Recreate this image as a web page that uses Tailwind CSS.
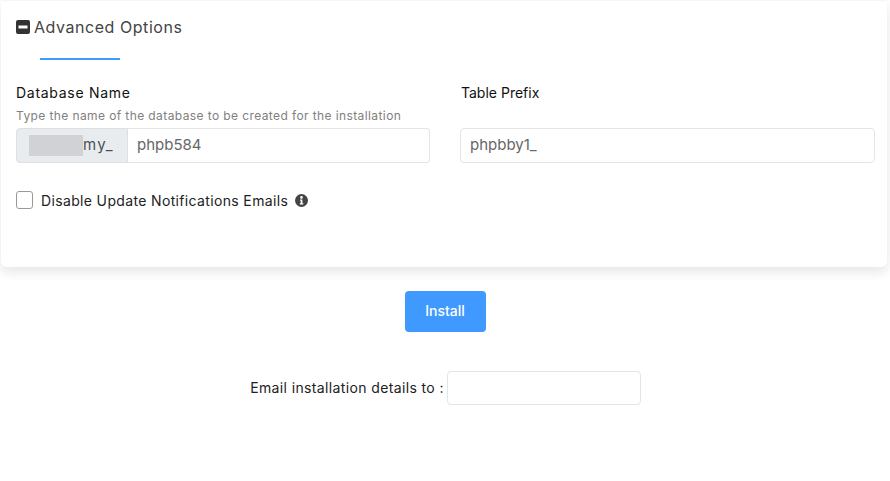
<!DOCTYPE html>
<html><head><meta charset="utf-8"><script src="https://cdn.jsdelivr.net/npm/@tailwindcss/browser@4"></script></head>
<body class="bg-white font-['Inter',sans-serif] text-[13px] text-[#111] overflow-hidden w-[890px] h-[481px]">
<div class="ml-px w-[886px] h-[267px] bg-white rounded-b-[6px] rounded-t-[3px] border-t border-[#f6f6f6] shadow-[0_5px_12px_rgba(0,0,0,0.10)] pl-[15px] pr-[12px]">
  <div class="flex items-center h-[18px] mt-[17px] gap-[4px]">
    <svg width="14" height="14" viewBox="0 0 14 14"><rect width="14" height="14" rx="2" fill="#333"/><rect x="2.5" y="5.5" width="9" height="3" fill="#fff"/></svg>
    <span class="text-[16px] leading-[18px] text-[#444] tracking-[0.55px]">Advanced Options</span>
  </div>
  <div class="ml-[24px] mt-[22px] w-[80px] h-[2px] bg-[#4099ff]"></div>
  <div class="flex gap-[30px] mt-[25px]">
    <div class="w-[414px]">
      <div class="text-[14px] leading-[16px] text-[#111] tracking-[0.72px]">Database Name</div>
      <div class="text-[12px] leading-[16px] mt-[7px] text-[#808080] tracking-[0.4px]">Type the name of the database to be created for the installation</div>
      <div class="flex h-[35px] mt-[4px]">
        <div class="w-[112px] shrink-0 bg-[#e9ecef] border border-[#dcdfe3] rounded-l-[4px] flex items-center pl-[12px] text-[15px] text-[#495057] tracking-[1.3px]">
          <span class="w-[54px] h-[21px] bg-[#d0d2d5]"></span><span>my_</span>
        </div>
        <div class="flex-1 border border-l-0 border-[#e4e4e4] rounded-r-[4px] flex items-center pl-[9px] text-[15px] text-[#666]">phpb584</div>
      </div>
    </div>
    <div class="w-[415px]">
      <div class="text-[14px] leading-[16px] text-[#111] pl-px">Table Prefix</div>
      <div class="h-[35px] mt-[27px] border border-[#e4e4e4] rounded-[4px] flex items-center pl-[9px] text-[15px] text-[#666]">phpbby1_</div>
    </div>
  </div>
  <div class="flex items-center mt-[28px] h-[18px]">
    <span class="w-[17px] h-[18px] border border-[#999] rounded-[3px] bg-white"></span>
    <span class="ml-[8px] text-[14px] text-[#222] tracking-[0.35px]">Disable Update Notifications Emails</span>
    <svg class="ml-[7px]" width="13" height="13" viewBox="0 0 13 13"><circle cx="6.5" cy="6.5" r="6.5" fill="#444"/><circle cx="6.5" cy="3.4" r="1.3" fill="#fff"/><path d="M5 5.6h2.4v3.6h.9v1.2H4.8V9.2h.9V6.8H5z" fill="#fff"/></svg>
  </div>
</div>
<div class="flex justify-center mt-[24px]">
  <button class="w-[81px] h-[41px] bg-[#4099ff] rounded-[4px] text-white text-[14px] font-medium pb-[2px]">Install</button>
</div>
<div class="flex justify-center items-center mt-[39px] pl-[1px]">
  <span class="text-[14px] text-[#222] mr-[3px] tracking-[0.37px] pb-[1px]">Email installation details to :</span>
  <div class="w-[194px] h-[34px] border border-[#e4e4e4] rounded-[4px]"></div>
</div>
</body></html>
